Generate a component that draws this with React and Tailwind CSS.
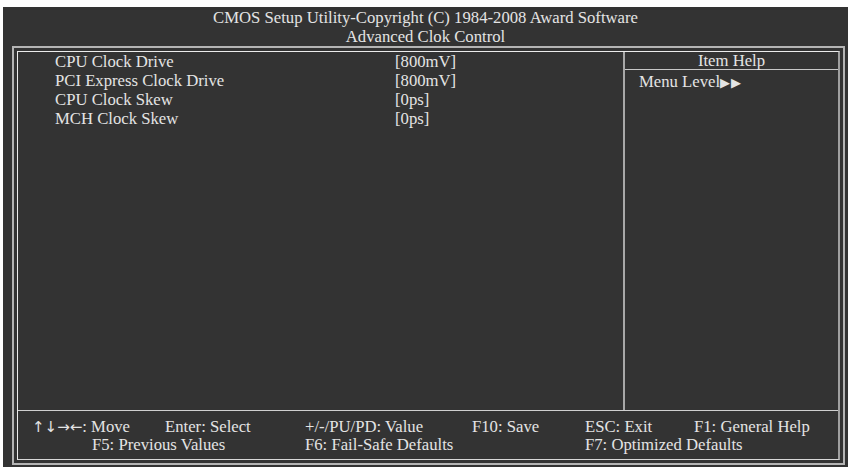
const items = [
  { label: 'CPU Clock Drive', value: '[800mV]' },
  { label: 'PCI Express Clock Drive', value: '[800mV]' },
  { label: 'CPU Clock Skew', value: '[0ps]' },
  { label: 'MCH Clock Skew', value: '[0ps]' },
];

export default function App() {
  return (
    <div
      className="w-[848px] h-[467px] bg-white pl-[3px] pt-[7px] text-[16.7px] text-[#e4e4e4]"
      style={{ fontFamily: '"Liberation Serif", "DejaVu Serif", serif' }}
    >
      <div className="w-[845px] h-[460px] bg-[#333333] flex flex-col">
        {/* header */}
        <div className="h-[39px] pt-[1px] text-center leading-[19px]">
          <div>CMOS Setup Utility-Copyright (C) 1984-2008 Award Software</div>
          <div>Advanced Clok Control</div>
        </div>

        {/* outer frame */}
        <div className="ml-[9px] w-[833px] h-[419px] border-2 border-[#b4b4b4] p-[3px]">
          <div className="w-[823px] h-[409px] border-t border-l border-[#ececec] border-r-2 border-b border-r-[#a0a0a0] border-b-[#d8d8d8] flex flex-col">
            <div className="h-[359px] flex border-b border-[#d0d0d0]">
              {/* items */}
              <div className="w-[605px] pl-[37px] leading-[19px]">
                {items.map((it) => (
                  <div key={it.label} className="flex">
                    <span className="w-[340px]">{it.label}</span>
                    <span>{it.value}</span>
                  </div>
                ))}
              </div>
              {/* help */}
              <div className="flex-1 border-l-2 border-[#a8a8a8]">
                <div className="h-[18px] leading-[17px] text-center border-b border-[#c8c8c8]">Item Help</div>
                <div className="pt-[2px] pl-[14px] leading-[19px] whitespace-nowrap">
                  Menu Level
                  <span
                    className="text-[13px] tracking-[1px]"
                    style={{ fontFamily: '"DejaVu Sans", sans-serif' }}
                  >
                    ▶▶
                  </span>
                </div>
              </div>
            </div>

            {/* footer */}
            <div className="pt-[7px] pl-[14px] leading-[18px] whitespace-nowrap">
              <div className="flex">
                <span className="w-[133px]">
                  <span className="text-[15px]" style={{ fontFamily: '"DejaVu Sans", sans-serif' }}>
                    ↑↓→←
                  </span>
                  : Move
                </span>
                <span className="w-[140px]">Enter: Select</span>
                <span className="w-[167px]">+/-/PU/PD: Value</span>
                <span className="w-[113px]">F10: Save</span>
                <span className="w-[109px]">ESC: Exit</span>
                <span>F1: General Help</span>
              </div>
              <div className="flex pl-[60px]">
                <span className="w-[213px]">F5: Previous Values</span>
                <span className="w-[280px]">F6: Fail-Safe Defaults</span>
                <span>F7: Optimized Defaults</span>
              </div>
            </div>
          </div>
        </div>
      </div>
    </div>
  );
}
